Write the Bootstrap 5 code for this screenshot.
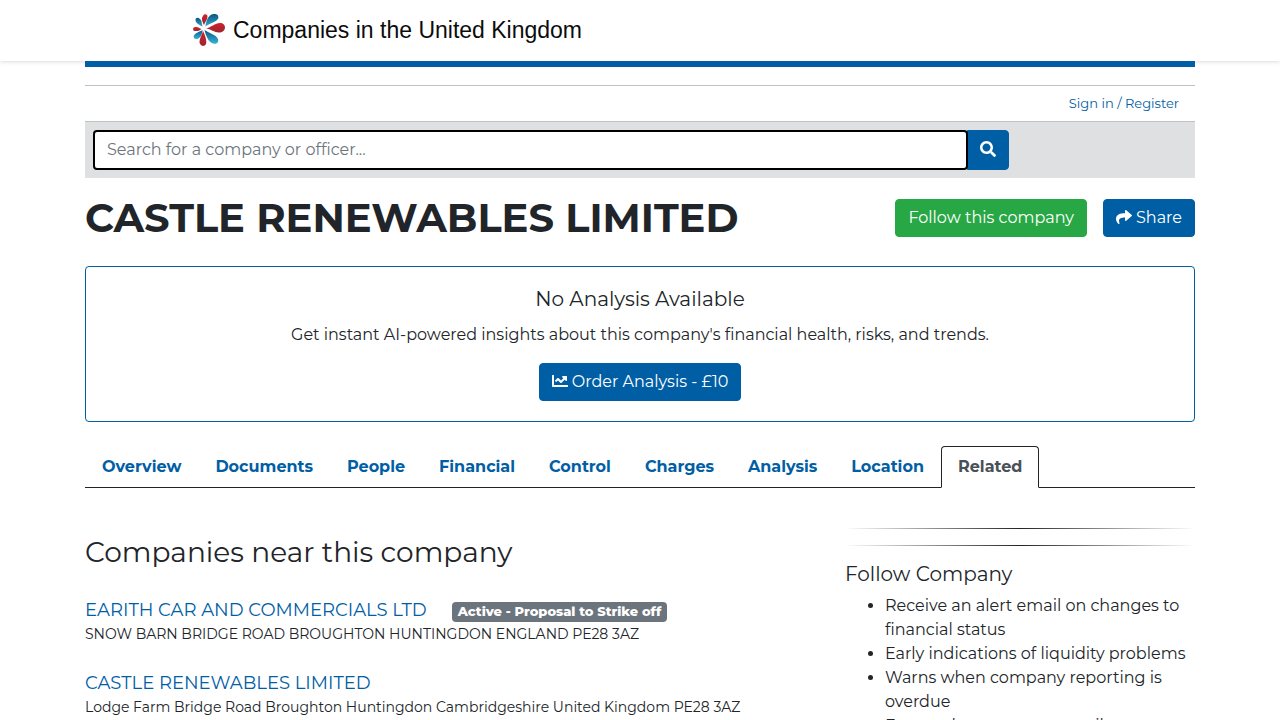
<!DOCTYPE html>
<html lang="en">
<head>
<meta charset="utf-8">
<meta name="viewport" content="width=device-width, initial-scale=1">
<title>CASTLE RENEWABLES LIMITED</title>
<link href="https://cdn.jsdelivr.net/npm/bootstrap@5.3.0/dist/css/bootstrap.min.css" rel="stylesheet">
<style>
:root { --brand: #005ea5; --ink: #212529; }
body { font-family: Montserrat, Inter, sans-serif; font-size: 16px; line-height: 24px; color: var(--ink); overflow-x: hidden; }
.site-wrap { max-width: 1140px; padding-left: 15px; padding-right: 15px; }
a { color: var(--brand); text-decoration: none; }
a:hover { text-decoration: underline; }
.btn { font-size: 16px; line-height: 24px; border-radius: 4px; padding: 6px 12px; }
.btn-brand { --bs-btn-bg: var(--brand); --bs-btn-color: #fff; --bs-btn-border-color: var(--brand); --bs-btn-hover-bg: #004b84; --bs-btn-hover-color: #fff; }
.btn-follow { --bs-btn-bg: #28a745; --bs-btn-color: #fff; --bs-btn-border-color: #28a745; --bs-btn-hover-bg: #218838; --bs-btn-hover-color: #fff; }
.glyph { width: 16px; height: 16px; fill: currentColor; vertical-align: -2px; }
.site-head { box-shadow: 0 0 5px rgba(0,0,0,.2); padding: 14px 0 15px; }
.site-logo { color: #0b0c0c; font: 23px/32px "Liberation Sans", Arial, sans-serif; margin-left: 108px; gap: 8px; }
.brand-bar { height: 6px; background: var(--brand); margin-bottom: 18px; }
.account { border-top: 1px solid #bfc1c3; border-bottom: 1px solid #bfc1c3; padding: 8px 16px 9px; font-size: 13px; line-height: 18px; }
.search-band { background: #dee0e2; padding: 8px; }
.search-box { width: 916px; max-width: 100%; }
.search-box .form-control { height: 40px; border: 2px solid #000; border-radius: 4px; padding: 5px 12px 7px; font-size: 16px; margin-right: -1px; z-index: 1; }
.search-box .form-control:focus { box-shadow: none; }
.search-box .form-control::placeholder { color: #6c757d; }
.page-title { font-size: 40px; line-height: 48px; font-weight: 700; }
.offer { border: 1px solid var(--brand); border-radius: 4px; padding: 20px; }
.offer .sub-title { margin-bottom: 12px; }
.sub-title { font-size: 20px; line-height: 24px; font-weight: 400; margin-bottom: 8px; }
.nav-tabs { border-bottom: 1px solid var(--ink); --bs-nav-tabs-border-radius: 4px; }
.nav-tabs .nav-link { color: var(--brand); font-weight: 700; padding: 8px 16px; margin-bottom: -1px; }
.nav-tabs .nav-link.active { color: #495057; border-color: var(--ink) var(--ink) #fff; }
.section-title { font-size: 28px; line-height: 32px; font-weight: 400; margin-bottom: 29px; }
.firm { margin-bottom: 25px; }
.firm-name { font-size: 18px; line-height: 27px; }
.firm-place { font-size: 14px; line-height: 21px; }
.status { font-size: 13px; line-height: 14px; font-weight: 800; background: #6c757d; border-radius: 4px; padding: 2px 6px 4px; margin: 2px 0 0 25px; }
.fade-rule { height: 1px; border: 0; opacity: 1; margin: 0 0 16px; background: linear-gradient(90deg, transparent, var(--ink), transparent); }
.side { width: 350px; }
.perks { padding-left: 40px; }
</style>
</head>
<body>
<header class="site-head bg-white">
  <div class="container site-wrap d-flex">
    <a href="#" class="site-logo d-flex align-items-center">
      <svg width="32" height="32" viewBox="0 0 32 32" aria-hidden="true">
        <defs>
          <linearGradient id="red" x1="0" y1="0" x2="0" y2="1"><stop offset="0" stop-color="#d3202b"/><stop offset="1" stop-color="#99272e"/></linearGradient>
          <linearGradient id="blueDown" x1="0" y1="0" x2="0" y2="1"><stop offset="0" stop-color="#075581"/><stop offset="1" stop-color="#38b4d8"/></linearGradient>
          <linearGradient id="blueUp" x1="0" y1="1" x2="0" y2="0"><stop offset="0" stop-color="#38a9cd"/><stop offset="1" stop-color="#075581"/></linearGradient>
        </defs>
        <path fill="url(#blueUp)" d="M12.500 12.500C13 6 16 0 21 0c4-.5 5.500 3 3.500 5.500-2.500 3-7 3.500-12 7z"/>
        <path fill="url(#red)" d="M11 11C9 7 8 4 10 2c1-2.500 4.500-2 4.500.500 0 3-2.500 5.500-3.500 8.500z"/>
        <path fill="url(#blueUp)" d="M9.500 12.500C6 11 2.500 9 2.500 6c0-2.500 2.500-3 4.500-1 2 1.500 1.500 4 2.500 7.500z"/>
        <path fill="url(#red)" d="M8.500 15c-3 2.500-6.500 2.500-8 1.500-1-2 0-3.500 2-3.500 2-.5 4 1 6 2z"/>
        <path fill="url(#red)" d="M13 14.500c5-1 9-5.500 14-5.500 3 0 5 2 5 4.500 0 3-3 5-6 5-5 0-8-3.500-13-4z"/>
        <path fill="url(#blueDown)" d="M9.500 16c0 5-2.500 8.500-5.500 9-2.500.500-4-1.500-3-3.500 1.500-3 5.500-3.500 8.500-5.500z"/>
        <path fill="url(#red)" d="M10 17c2 4 4 9 3 13-1 2.500-4.500 2.500-5.500.500C4.500 27 9 22 10 17z"/>
        <path fill="url(#blueDown)" d="M11.500 16c4 3 11.500 4.500 13.500 9 1 3.500-1.500 5.500-5 4.500-4.500-1.500-7-7.500-8.500-13.500z"/>
      </svg>
      <span>Companies in the United Kingdom</span>
    </a>
  </div>
</header>

<div class="container site-wrap">
  <div class="brand-bar"></div>
  <div class="account text-end"><a href="#">Sign in / Register</a></div>
  <form class="search-band">
    <div class="search-box d-flex">
      <input class="form-control flex-grow-1 position-relative" type="search" placeholder="Search for a company or officer..." aria-label="Search for a company or officer">
      <button class="btn btn-brand rounded-start-0" type="button" aria-label="Search">
        <svg class="glyph" viewBox="0 0 512 512"><path d="M505 442.700 405.300 343c-4.500-4.500-10.600-7-17-7H372c27.600-35.300 44-79.700 44-128C416 93.100 322.900 0 208 0S0 93.100 0 208s93.100 208 208 208c48.300 0 92.700-16.400 128-44v16.300c0 6.400 2.500 12.500 7 17l99.700 99.700c9.400 9.400 24.600 9.400 33.900 0l28.300-28.300c9.400-9.400 9.400-24.600.1-34zM208 336c-70.700 0-128-57.200-128-128 0-70.700 57.200-128 128-128 70.700 0 128 57.200 128 128 0 70.700-57.200 128-128 128z"/></svg>
      </button>
    </div>
  </form>

  <div class="d-flex flex-wrap justify-content-between align-items-center mt-3">
    <h1 class="page-title mb-0">CASTLE RENEWABLES LIMITED</h1>
    <div class="d-flex gap-3">
      <button class="btn btn-follow" type="button">Follow this company</button>
      <button class="btn btn-brand" type="button"><svg class="glyph" viewBox="0 0 512 512" aria-hidden="true"><path d="M503.700 189.800 327.700 37.900C312.300 24.500 288 35.300 288 56v80.100C127.400 137.900 0 170.100 0 322.300c0 61.400 39.600 122.300 83.300 154.100 13.700 9.900 33.100-2.500 28.100-18.600C66.100 312.800 132.900 274.300 288 272.100V360c0 20.700 24.300 31.500 39.700 18.200l176-152c11.100-9.600 11.100-26.800 0-36.400z"/></svg> Share</button>
    </div>
  </div>

  <section class="offer text-center mt-4">
    <h2 class="sub-title">No Analysis Available</h2>
    <p class="mb-3">Get instant AI-powered insights about this company's financial health, risks, and trends.</p>
    <button class="btn btn-brand" type="button"><svg class="glyph" viewBox="0 0 512 512" aria-hidden="true"><path d="M496 384H64V80c0-8.800-7.200-16-16-16H16C7.200 64 0 71.200 0 80v336c0 17.700 14.300 32 32 32h464c8.800 0 16-7.200 16-16v-32c0-8.800-7.200-16-16-16zM464 96H345.900c-21.400 0-32.100 25.900-17 41l32.400 32.400L288 242.700l-73.400-73.400c-12.500-12.500-32.800-12.500-45.300 0l-68.700 68.700c-6.200 6.200-6.200 16.400 0 22.600l22.600 22.600c6.200 6.200 16.400 6.200 22.600 0L192 237.300l73.400 73.400c12.500 12.500 32.800 12.500 45.300 0l96-96 32.400 32.400c15.100 15.100 41 4.400 41-17V112c-.1-8.800-7.300-16-16.100-16z"/></svg> Order Analysis - £10</button>
  </section>

  <ul class="nav nav-tabs mt-4">
    <li class="nav-item"><a class="nav-link" href="#">Overview</a></li>
    <li class="nav-item"><a class="nav-link" href="#">Documents</a></li>
    <li class="nav-item"><a class="nav-link" href="#">People</a></li>
    <li class="nav-item"><a class="nav-link" href="#">Financial</a></li>
    <li class="nav-item"><a class="nav-link" href="#">Control</a></li>
    <li class="nav-item"><a class="nav-link" href="#">Charges</a></li>
    <li class="nav-item"><a class="nav-link" href="#">Analysis</a></li>
    <li class="nav-item"><a class="nav-link" href="#">Location</a></li>
    <li class="nav-item"><a class="nav-link active" href="#" aria-current="page">Related</a></li>
  </ul>

  <div class="d-flex flex-wrap justify-content-between pt-4">
    <main class="pt-4">
      <h2 class="section-title">Companies near this company</h2>
      <article class="firm">
        <div class="d-flex align-items-center"><a class="firm-name" href="#">EARITH CAR AND COMMERCIALS LTD</a><span class="status text-white">Active - Proposal to Strike off</span></div>
        <div class="firm-place">SNOW BARN BRIDGE ROAD BROUGHTON HUNTINGDON ENGLAND PE28 3AZ</div>
      </article>
      <article class="firm">
        <div class="d-flex"><a class="firm-name" href="#">CASTLE RENEWABLES LIMITED</a></div>
        <div class="firm-place">Lodge Farm Bridge Road Broughton Huntingdon Cambridgeshire United Kingdom PE28 3AZ</div>
      </article>
    </main>
    <aside class="side pt-3">
      <hr class="fade-rule">
      <hr class="fade-rule">
      <h2 class="sub-title">Follow Company</h2>
      <ul class="perks">
        <li>Receive an alert email on changes to financial status</li>
        <li>Early indications of liquidity problems</li>
        <li>Warns when company reporting is overdue</li>
        <li>Free and sent to your email</li>
      </ul>
    </aside>
  </div>
</div>
<script src="https://cdn.jsdelivr.net/npm/bootstrap@5.3.0/dist/js/bootstrap.bundle.min.js"></script>
</body>
</html>
